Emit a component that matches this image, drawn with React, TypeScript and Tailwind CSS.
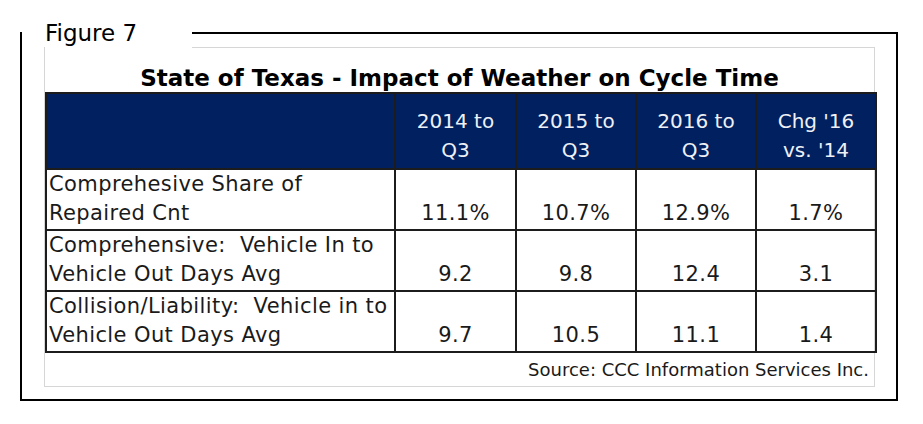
const rows = [
  { label: ["Comprehesive Share of", "Repaired Cnt"], values: ["11.1%", "10.7%", "12.9%", "1.7%"] },
  { label: ["Comprehensive:  Vehicle In to", "Vehicle Out Days Avg"], values: ["9.2", "9.8", "12.4", "3.1"] },
  { label: ["Collision/Liability:  Vehicle in to", "Vehicle Out Days Avg"], values: ["9.7", "10.5", "11.1", "1.4"] },
];

const headers = [
  ["2014 to", "Q3"],
  ["2015 to", "Q3"],
  ["2016 to", "Q3"],
  ["Chg '16", "vs. '14"],
];

export default function App() {
  return (
    <div className="min-h-[424px] w-[923px] bg-white pt-[20px] font-['DejaVu_Sans',sans-serif] text-[#1a1a1a]">
      <fieldset className="ml-[20px] w-[878px] border-2 border-black pb-[12px] pt-px">
        <legend className="w-[170px] pl-[23px] text-[23px] leading-[26px] text-black">Figure 7</legend>
        <div className="ml-[22px] w-[831px] border border-t-0 border-[#d6d6d6]">
          <div className="flex h-px">
            <div className="w-[147px] bg-white" />
            <div className="flex-1 bg-[#d6d6d6]" />
          </div>
          <div className="flex h-[44px] items-end justify-center pb-[2px] text-[23px] font-bold leading-none text-black">
            State of Texas - Impact of Weather on Cycle Time
          </div>
          <table className="w-full table-fixed border-collapse leading-[29px]">
            <colgroup>
              <col className="w-[349px]" />
              <col className="w-[121px]" />
              <col className="w-[120px]" />
              <col className="w-[120px]" />
              <col className="w-[120px]" />
            </colgroup>
            <thead>
              <tr className="h-[76px] bg-[#002060] text-[20px]">
                <th className="border-2 border-[#1c1c1c]" />
                {headers.map((h) => (
                  <th
                    key={h[0]}
                    className="border-2 border-[#1c1c1c] pb-[3px] align-bottom font-normal text-[#eef0f6]"
                  >
                    {h[0]}
                    <br />
                    {h[1]}
                  </th>
                ))}
              </tr>
            </thead>
            <tbody className="text-[21px] tracking-[0.4px]">
              {rows.map((r) => (
                <tr key={r.label[0]} className="h-[61px]">
                  <td className="whitespace-pre border-2 border-[#1c1c1c] pb-[1px] pl-[2px] align-bottom">
                    {r.label[0]}
                    <br />
                    {r.label[1]}
                  </td>
                  {r.values.map((v, i) => (
                    <td key={i} className="border-2 border-[#1c1c1c] pb-[1px] text-center align-bottom">
                      {v}
                    </td>
                  ))}
                </tr>
              ))}
            </tbody>
          </table>
          <div className="flex h-[33px] items-center justify-end pr-[5px] text-[18px]">
            Source: CCC Information Services Inc.
          </div>
        </div>
      </fieldset>
    </div>
  );
}
